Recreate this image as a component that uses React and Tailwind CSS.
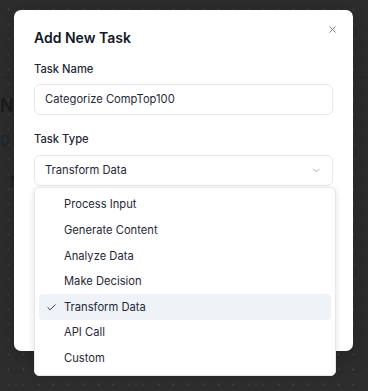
import { X, ChevronDown, Check } from "lucide-react";

const types = ["Process Input", "Generate Content", "Analyze Data", "Make Decision", "Transform Data", "API Call", "Custom"];

export default function App() {
  const selected = "Transform Data";

  return (
    <div
      className="relative w-[368px] h-[391px] overflow-hidden bg-[#2d2d2d] bg-[radial-gradient(circle,#3b3b3b_1px,transparent_1.2px)] bg-[size:15px_15px] bg-[position:1px_2px]"
      style={{ fontFamily: "Inter, 'Noto Sans', sans-serif" }}
    >
      {/* page behind the overlay */}
      <div className="h-[78px] border-b border-[#282828]" />
      <div className="pt-[16px] text-[18px] font-semibold leading-[24px] text-[#1b1b1b]">New Workflow</div>
      <div className="pt-[12px] text-[15px] leading-[22px] text-[#1c2536]">0</div>
      <div className="pl-[10px] pt-[20px] text-[14px] leading-[20px] text-[#1d1d1d]">No tasks</div>

      {/* dialog */}
      <div className="absolute left-[14px] top-[10px] flex h-[341px] w-[339px] flex-col rounded-[7px] bg-white px-5 pt-[18px] shadow-[0_4px_20px_rgba(0,0,0,0.25)]">
        <button className="absolute right-[15px] top-[14px] text-[#6b7280]">
          <X size={11} strokeWidth={2} />
        </button>
        <h2 className="text-[14px] font-semibold leading-[20px] text-[#111827]">Add New Task</h2>

        <div className="mt-[13px] flex flex-col gap-[7px]">
          <label className="text-[11.2px] font-medium leading-[16px] text-[#1f2937]">Task Name</label>
          <div className="flex h-[31px] items-center rounded-[6px] border border-[#e5e7eb] px-[10px] text-[11.2px] text-[#1f2937]">
            Categorize CompTop100
          </div>
        </div>

        <div className="mt-[16px] flex flex-col gap-[8px]">
          <label className="text-[11.2px] font-medium leading-[16px] text-[#1f2937]">Task Type</label>
          <div className="flex h-[31px] items-center justify-between rounded-[6px] border border-[#e5e7eb] px-[10px] text-[11.2px] text-[#1f2937]">
            <span>{selected}</span>
            <ChevronDown size={11} className="text-[#9ca3af]" />
          </div>
        </div>
      </div>

      {/* open select menu */}
      <div className="absolute left-[34px] top-[187px] flex w-[302px] flex-col rounded-[5px] border border-[#e5e7eb] bg-white p-1 shadow-[0_2px_6px_rgba(0,0,0,0.12)]">
        {types.map((t) => (
          <div
            key={t}
            className={`relative flex h-[25.6px] items-center rounded-[4px] pl-[25px] text-[11.2px] text-[#1f2937] ${t === selected ? "bg-[#eff3f8]" : ""}`}
          >
            {t === selected && (
              <Check size={11} strokeWidth={2} className="absolute left-[7px] text-[#1f2937]" />
            )}
            {t}
          </div>
        ))}
      </div>
    </div>
  );
}
